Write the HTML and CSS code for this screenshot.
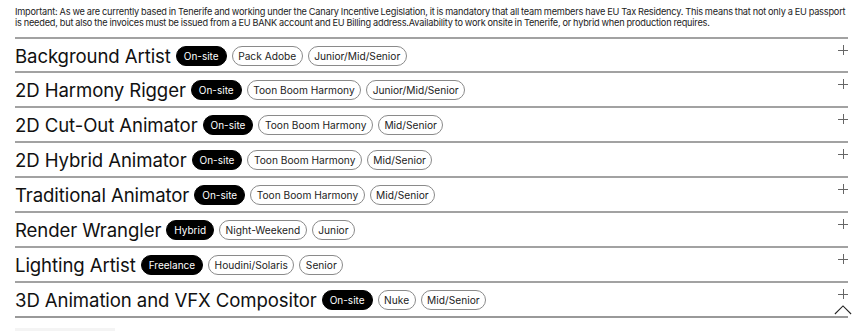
FILE: index.html
```html
<!DOCTYPE html>
<html>
<head>
<meta charset="utf-8">
<link rel="stylesheet" href="styles.css">
</head>
<body>
<div class="page">
  <p class="intro">Important: As we are currently based in Tenerife and working under the Canary Incentive Legislation, it is mandatory that all team members have EU Tax Residency. This means that not only a EU passport is needed, but also the invoices must be issued from a EU BANK account and EU Billing address.Availability to work onsite in Tenerife, or hybrid when production requires.</p>
  <ul class="jobs">
    <li class="job"><div class="info"><span class="title">Background Artist</span><span class="pill dark">On-site</span><span class="pill">Pack Adobe</span><span class="pill">Junior/Mid/Senior</span></div><span class="plus"></span></li>
    <li class="job"><div class="info"><span class="title">2D Harmony Rigger</span><span class="pill dark">On-site</span><span class="pill">Toon Boom Harmony</span><span class="pill">Junior/Mid/Senior</span></div><span class="plus"></span></li>
    <li class="job"><div class="info"><span class="title">2D Cut-Out Animator</span><span class="pill dark">On-site</span><span class="pill">Toon Boom Harmony</span><span class="pill">Mid/Senior</span></div><span class="plus"></span></li>
    <li class="job"><div class="info"><span class="title">2D Hybrid Animator</span><span class="pill dark">On-site</span><span class="pill">Toon Boom Harmony</span><span class="pill">Mid/Senior</span></div><span class="plus"></span></li>
    <li class="job"><div class="info"><span class="title">Traditional Animator</span><span class="pill dark">On-site</span><span class="pill">Toon Boom Harmony</span><span class="pill">Mid/Senior</span></div><span class="plus"></span></li>
    <li class="job"><div class="info"><span class="title">Render Wrangler</span><span class="pill dark">Hybrid</span><span class="pill">Night-Weekend</span><span class="pill">Junior</span></div><span class="plus"></span></li>
    <li class="job"><div class="info"><span class="title">Lighting Artist</span><span class="pill dark">Freelance</span><span class="pill">Houdini/Solaris</span><span class="pill">Senior</span></div><span class="plus"></span></li>
    <li class="job"><div class="info"><span class="title">3D Animation and VFX Compositor</span><span class="pill dark">On-site</span><span class="pill">Nuke</span><span class="pill">Mid/Senior</span></div><span class="plus"></span></li>
  </ul>
  <div class="bottom"><span class="stub"></span></div>
  <button class="totop" aria-label="Back to top"><svg width="20" height="11" viewBox="0 0 20 11"><path d="M1 10.5 L10 1.5 L19 10.5" fill="none" stroke="#222" stroke-width="1.2"/></svg></button>
</div>
</body>
</html>
```
FILE: styles.css
```css
* { box-sizing: border-box; }
html, body { margin: 0; padding: 0; background: #fff; }
body { font-family: Inter, "Noto Sans", sans-serif; color: #111; overflow: hidden; }
.page { position: relative; padding: 6px 17px 0 15px; width: 865px; height: 331px; }
.intro { margin: 0 0 9px; font-size: 9.2px; line-height: 11px; color: #222; letter-spacing: -0.2px; word-spacing: -0.35px; }
.jobs { list-style: none; margin: 0; padding: 0; border-bottom: 2px solid #999; }
.job { display: flex; justify-content: space-between; align-items: flex-start; height: 35px; border-top: 2px solid #a2a2a2; }
.job:first-child { height: 34px; }
.info { display: flex; align-items: center; height: 33px; gap: 5px; padding-top: 1px; }
.title { font-size: 18.6px; letter-spacing: -0.1px; color: #111; margin-right: 0; }
.pill { display: inline-flex; align-items: center; height: 20px; padding: 0 5.5px; border: 1px solid #8a8a8a; border-radius: 10px; font-size: 10.2px; color: #222; }
.pill.dark { background: #000; border-color: #000; color: #fff; font-size: 10px; padding: 0 7px; }
.plus { position: relative; width: 10px; height: 10px; margin: 6px 0 0 0; }
.plus::before, .plus::after { content: ""; position: absolute; background: #666; }
.plus::before { left: 0; top: 4.5px; width: 10px; height: 1px; }
.plus::after { left: 4.5px; top: 0; width: 1px; height: 10px; }
.bottom { padding-top: 10px; }
.stub { display: block; width: 100px; height: 4px; background: #f4f4f4; }
.totop { position: absolute; right: 13px; top: 304px; background: none; border: 0; padding: 0; width: 18px; height: 11px; }
.totop svg { display: block; width: 18px; }
```
